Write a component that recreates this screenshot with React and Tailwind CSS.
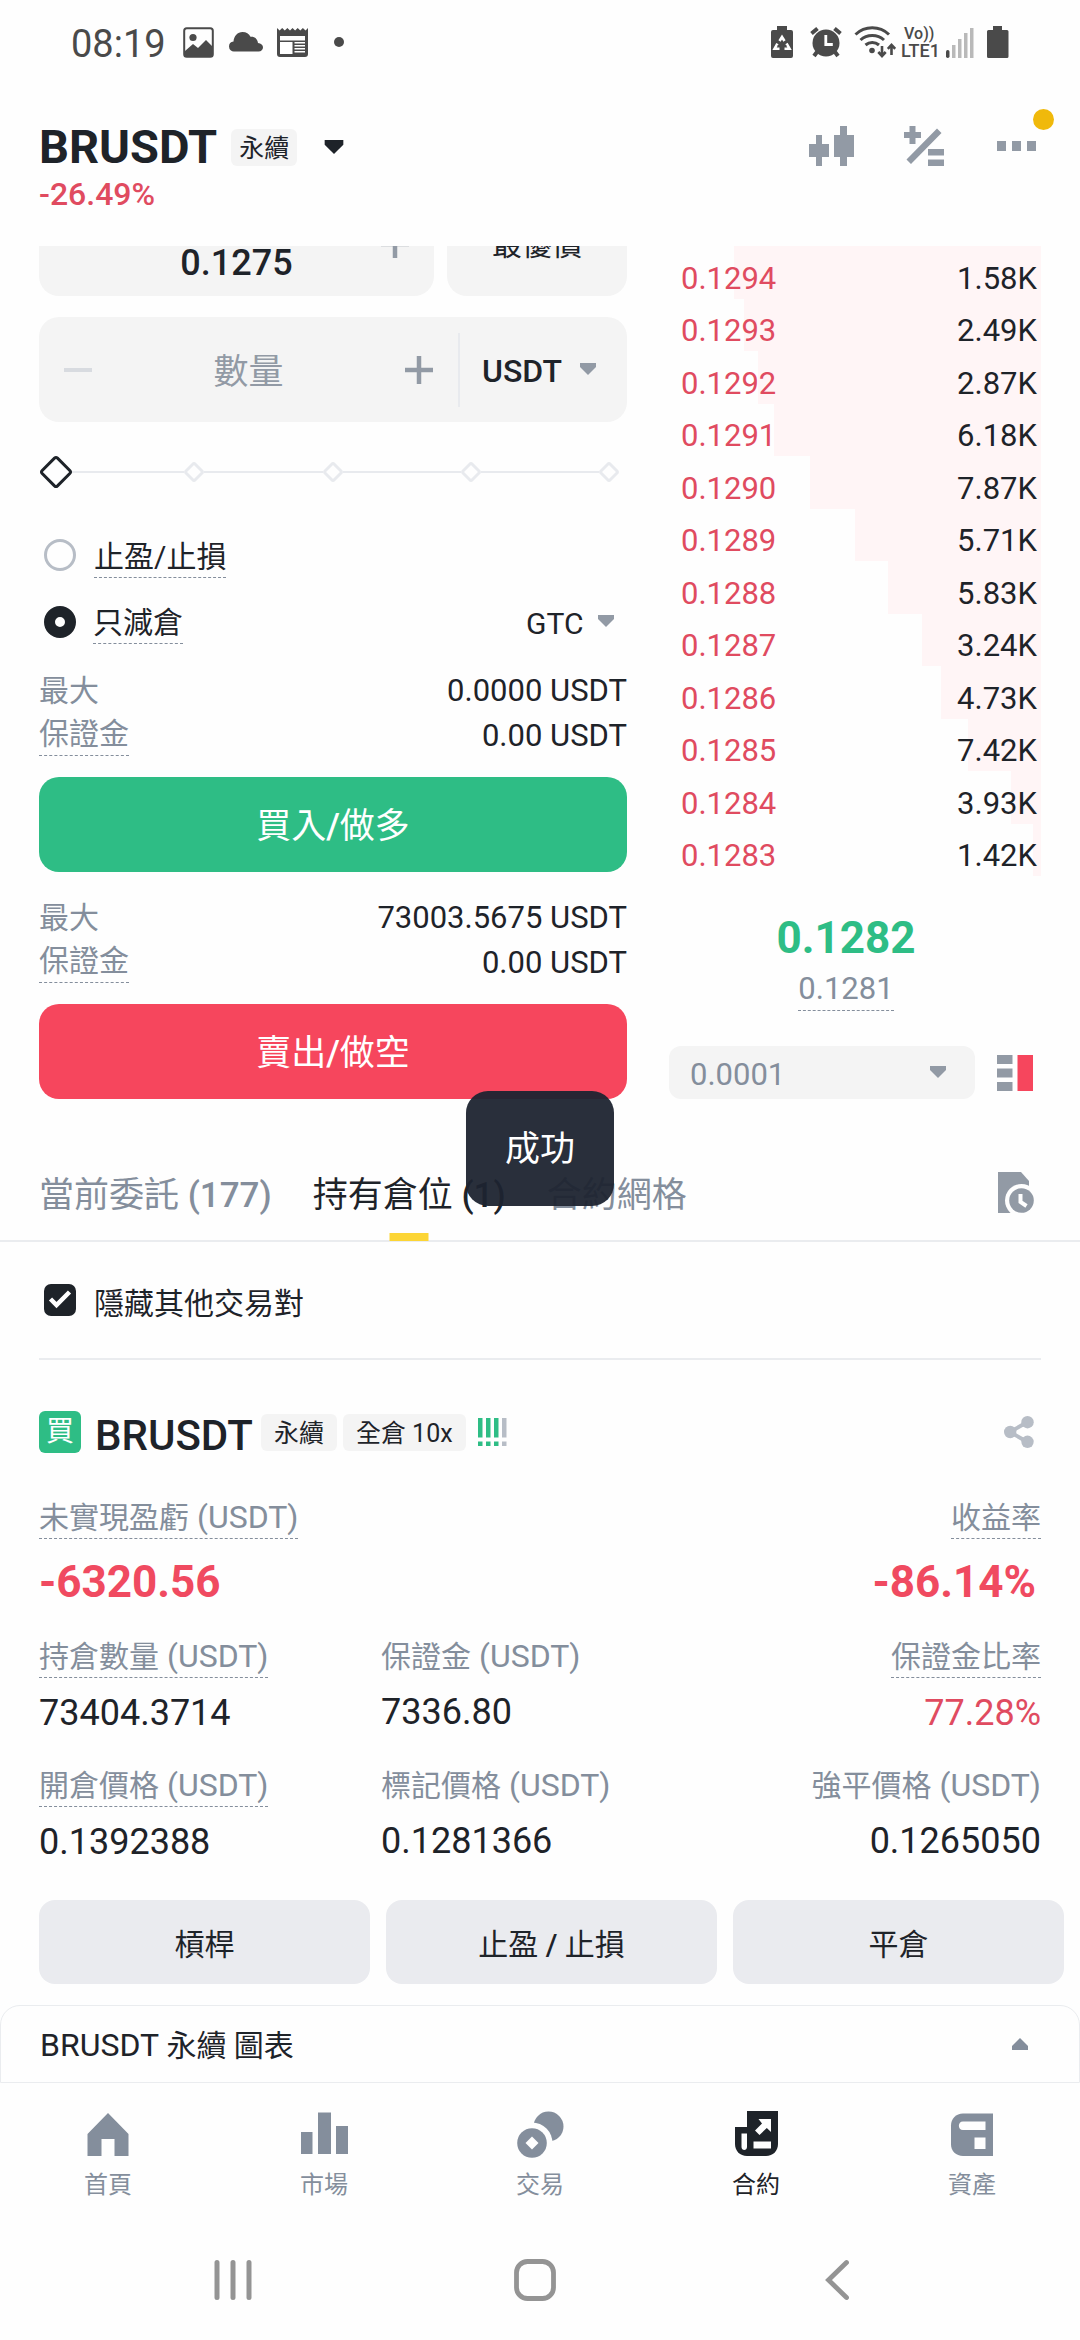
import React from "react";

const ASKS = [
  ["0.1294", "1.58K", 307],
  ["0.1293", "2.49K", 297],
  ["0.1292", "2.87K", 283],
  ["0.1291", "6.18K", 267],
  ["0.1290", "7.87K", 231],
  ["0.1289", "5.71K", 186],
  ["0.1288", "5.83K", 153],
  ["0.1287", "3.24K", 119],
  ["0.1286", "4.73K", 100],
  ["0.1285", "7.42K", 73],
  ["0.1284", "3.93K", 30],
  ["0.1283", "1.42K", 8],
];
const DEPTH_MAX = 372;

function Caret({ className }) {
  return (
    <svg viewBox="0 0 16 12" className={className} fill="currentColor" aria-hidden="true">
      <path d="M0 0h16v4L8 12 0 4z" />
    </svg>
  );
}

function StatusBar() {
  return (
    <div className="flex h-[84px] items-center justify-between pl-[71px] pr-[71px] text-[#4a4a4a]">
      <div className="flex items-center">
        <span className="pt-1 text-[38px] leading-[44px]">08:19</span>
        <svg viewBox="0 0 31 31" className="ml-[17px] h-[31px] w-[31px]" aria-hidden="true">
          <rect x="1.2" y="1.2" width="28.6" height="28.6" rx="2.5" fill="none" stroke="currentColor" strokeWidth="2" />
          <circle cx="10" cy="10.5" r="3.6" fill="currentColor" />
          <path d="M2 24l8-7 5 4 8-8 7 7v9H2z" fill="currentColor" />
        </svg>
        <svg viewBox="0 0 34 20" className="ml-[15px] h-[20px] w-[34px] shrink-0" fill="currentColor" aria-hidden="true">
          <path d="M5.5 19.500A5 5 0 0 1 0 14.500 5 5 0 0 1 4.500 9.500C5 4 8.500 0 13.500 0c3.800 0 6.500 2 8 4.800 4-.5 7 1.900 7.500 6.200 3 .3 5 2 5 4.300 0 2.500-1.800 4.200-4.500 4.200z" />
        </svg>
        <svg viewBox="0 0 31 29" className="ml-[14px] h-[29px] w-[31px]" aria-hidden="true">
          <path d="M0 0l2.600 2.500L5.200 0l2.600 2.500L10.400 0 13 2.500 15.500 0l2.600 2.500L20.700 0l2.600 2.500L25.900 0l2.600 2.500L31 0v26a3 3 0 0 1-3 3H3a3 3 0 0 1-3-3z" fill="currentColor" />
          <path d="M3 8h25v4.500H3zM3 14h12.500v12H3zM17.500 14H28v1.600H17.500zM17.500 17H28v1.600H17.500zM17.500 20H28v1.600H17.500zM17.500 23H28v1.600H17.500z" fill="#fff" />
        </svg>
        <span className="ml-[26px] h-[10px] w-[10px] rounded-full bg-current" />
      </div>
      <div className="flex items-center">
        <svg viewBox="0 0 22 32" className="h-[32px] w-[22px]" aria-hidden="true">
          <path d="M6 0h10v4h4a2 2 0 0 1 2 2v24a2 2 0 0 1-2 2H2a2 2 0 0 1-2-2V6a2 2 0 0 1 2-2h4z" fill="currentColor" />
          <path d="M8.500 15l2.500-4 2.500 4M15.500 17.500l3 5.200h-5M8.500 22.700H3.600l2.800-5" fill="none" stroke="#fff" strokeWidth="2.600" />
          <path d="M11 15.500l2 3 3 1-3 1.500-2 3-2-3-3-1.500 3-1z" fill="currentColor" />
        </svg>
        <svg viewBox="0 0 32 32" className="ml-[17px] h-[32px] w-[32px]" aria-hidden="true">
          <path d="M1.500 7.500l6-5M30.500 7.500l-6-5" stroke="currentColor" strokeWidth="4" />
          <path d="M7 26l-3 4M25 26l3 4" stroke="currentColor" strokeWidth="4" />
          <circle cx="16" cy="17" r="13.500" fill="currentColor" />
          <path d="M15.800 9v9.500h7" fill="none" stroke="#fff" strokeWidth="2.800" />
        </svg>
        <svg viewBox="0 0 42 32" className="ml-[12px] h-[32px] w-[42px]" fill="none" stroke="currentColor" aria-hidden="true">
          <path d="M1.500 8.500c9.500-9 24-9 33.500 0M6.500 14c6.500-6 17-6 23.500 0M11.500 19c4-3.500 9.500-3.500 13.500 0" strokeWidth="3" />
          <circle cx="18" cy="24.500" r="2.800" fill="currentColor" stroke="none" />
          <path d="M28 20v9M24.300 26l3.700 4 3.700-4M37.500 29v-9M33.800 22.800l3.700-4 3.700 4" strokeWidth="2.600" />
        </svg>
        <span className="ml-[5px] flex flex-col font-medium">
          <span className="pl-[3px] text-[16px] leading-[17px]">Vo))</span>
          <span className="text-[18px] leading-[17px]">LTE1</span>
        </span>
        <svg viewBox="0 0 28 31" className="ml-[6px] h-[31px] w-[28px]" aria-hidden="true">
          <rect x="0" y="23" width="3.500" height="8" rx="1.700" fill="currentColor" />
          <path d="M6 18h3.500v13H6zM12 12h3.500v19H12zM18 6h3.500v25H18zM24 1h3.500v30H24z" fill="#b9b9b9" />
        </svg>
        <svg viewBox="0 0 22 32" className="ml-[13px] h-[32px] w-[22px]" fill="currentColor" aria-hidden="true">
          <path d="M6 0h9v4h5a1.500 1.500 0 0 1 1.500 1.500v25A1.500 1.500 0 0 1 20 32H1.500A1.500 1.500 0 0 1 0 30.500v-25A1.500 1.500 0 0 1 1.500 4H6z" />
        </svg>
      </div>
    </div>
  );
}

function Header() {
  return (
    <header className="flex h-[162px] justify-between pl-[39px] pr-[39px] pt-[36px]">
      <div>
        <button type="button" className="flex h-[54px] items-center">
          <h1 className="text-[47px] font-bold leading-[54px]">BRUSDT</h1>
          <span className="ml-[14px] rounded-md bg-[#f4f4f4] px-[8px] pt-[2px] text-[25px] leading-[35px]">永續</span>
          <Caret className="ml-[27px] h-[14px] w-[20px]" />
        </button>
        <p className="mt-[2px] text-[32px] font-medium leading-[36px] text-[#e04b60]">-26.49%</p>
      </div>
      <div className="flex h-[52px] items-center gap-[50px] text-[#929aa5]">
        <button type="button" aria-label="K線圖">
          <svg viewBox="0 0 45 40" className="h-[40px] w-[45px]" fill="currentColor" aria-hidden="true">
            <path d="M7 9h6v9h7v13h-7v9H7v-9H0V18h7zM31 0h7v9h7v22h-7v9h-7v-9h-6V9h6z" />
          </svg>
        </button>
        <button type="button" aria-label="計算機">
          <svg viewBox="0 0 40 40" className="h-[40px] w-[40px]" fill="currentColor" aria-hidden="true">
            <path d="M5.500 0h6v6H17v6h-5.500v6h-6v-6H0V6h5.500zM33 2.500l4.500 4.500L7 38l-4.500-4.500zM24 23h16v6.500H24zM24 33.500h16V40H24z" />
          </svg>
        </button>
        <button type="button" aria-label="更多" className="relative ml-[3px] mr-[5px] flex h-[40px] items-center gap-[6px]">
          <span className="h-[10px] w-[9px] bg-current" />
          <span className="h-[10px] w-[9px] bg-current" />
          <span className="h-[10px] w-[9px] bg-current" />
          <span className="absolute -right-[18px] -top-[17px] h-[21px] w-[21px] rounded-full bg-[#f0b90b]" />
        </button>
      </div>
    </header>
  );
}

function Minus({ className }) {
  return (
    <svg viewBox="0 0 28 28" className={className} aria-hidden="true">
      <path d="M0 14h28" stroke="currentColor" strokeWidth="4" />
    </svg>
  );
}

function Plus({ className }) {
  return (
    <svg viewBox="0 0 28 28" className={className} aria-hidden="true">
      <path d="M0 14h28M14 0v28" stroke="currentColor" strokeWidth="4.500" />
    </svg>
  );
}

function AmountRows({ max }) {
  return (
    <dl className="text-[31px] leading-[45px]">
      <div className="flex justify-between">
        <dt className="text-[30px] text-[#848e9c]">最大</dt>
        <dd>{max} USDT</dd>
      </div>
      <div className="flex h-[45px] items-start justify-between">
        <dt className="border-b border-dashed border-[#848e9c] text-[30px] leading-[42px] text-[#848e9c]">保證金</dt>
        <dd>0.00 USDT</dd>
      </div>
    </dl>
  );
}

function SizeSlider() {
  return (
    <div className="relative flex h-[100px] items-center pr-2">
      <div className="flex w-full items-center">
        <svg viewBox="0 0 34 34" className="relative z-10 -mr-[7px] h-[34px] w-[34px] shrink-0" fill="#fefefe" aria-hidden="true">
          <path d="M15.500 3.200a2.200 2.200 0 0 1 3 0L30.800 15.500a2.200 2.200 0 0 1 0 3L18.500 30.800a2.200 2.200 0 0 1-3 0L3.200 18.500a2.200 2.200 0 0 1 0-3z" stroke="#1e2329" strokeWidth="3" />
        </svg>
        {[0, 1, 2, 3].map((i) => (
          <React.Fragment key={i}>
            <span className="h-[2px] grow bg-[#e8eaee]" />
            <svg viewBox="0 0 20 20" className="h-[20px] w-[20px] shrink-0" fill="none" aria-hidden="true">
              <path d="M9 2a1.400 1.400 0 0 1 2 0l7 7a1.400 1.400 0 0 1 0 2l-7 7a1.400 1.400 0 0 1-2 0l-7-7a1.400 1.400 0 0 1 0-2z" stroke="#e8eaee" strokeWidth="3" />
            </svg>
          </React.Fragment>
        ))}
      </div>
      <input type="range" min="0" max="100" step="25" defaultValue="0" aria-label="數量百分比" className="absolute inset-x-0 top-[30px] z-20 h-[40px] w-full opacity-0" />
    </div>
  );
}

const RADIO = "m-0 h-[32px] w-[32px] shrink-0 appearance-none rounded-full border-[3px] border-[#b7bdc6] checked:border-[11px] checked:border-[#1e2329]";

function OrderForm() {
  return (
    <form className="-mt-[55px] min-w-0" onSubmit={(e) => e.preventDefault()}>
      <div className="flex gap-[13px]">
        <div className="flex h-[105px] min-w-0 grow items-center rounded-[20px] bg-[#f4f4f4] px-[25px]">
          <button type="button" aria-label="減少價格" className="text-[#929aa5]">
            <Minus className="h-[28px] w-[28px]" />
          </button>
          <input aria-label="價格" defaultValue="0.1275" className="h-full min-w-0 grow bg-transparent pt-[38px] text-center text-[36px] font-medium outline-none" />
          <button type="button" aria-label="增加價格" className="text-[#929aa5]">
            <Plus className="h-[28px] w-[28px]" />
          </button>
        </div>
        <button type="button" className="h-[105px] w-[180px] shrink-0 rounded-[20px] bg-[#f4f4f4] pt-[2px] text-[30px]">最優價</button>
      </div>
      <div className="mt-[21px] flex h-[105px] items-center rounded-[20px] bg-[#f4f4f4] pl-[25px]">
        <button type="button" aria-label="減少數量" className="text-[#d8dbe0]">
          <Minus className="h-[28px] w-[28px]" />
        </button>
        <input aria-label="數量" placeholder="數量" className="h-full min-w-0 grow bg-transparent pt-[5px] text-center text-[35px] outline-none placeholder:text-[#929aa5]" />
        <button type="button" aria-label="增加數量" className="text-[#929aa5]">
          <Plus className="h-[28px] w-[28px]" />
        </button>
        <div className="relative ml-[25px] flex h-[74px] w-[169px] shrink-0 items-center border-l-2 border-[#e8eaee]">
          <select aria-label="單位" className="h-full w-full appearance-none bg-transparent pl-[22px] pt-[3px] text-[32px] font-medium outline-none">
            <option>USDT</option>
          </select>
          <Caret className="pointer-events-none absolute right-[31px] top-[30px] h-[12px] w-[16px] text-[#929aa5]" />
        </div>
      </div>
      <SizeSlider />
      <div className="flex h-[66px] items-center pl-[5px]">
        <input type="radio" name="option" id="tpsl" className={RADIO} />
        <label htmlFor="tpsl" className="ml-[18px] mt-[4px] border-b border-dashed border-[#848e9c] text-[30px] leading-[40px]">止盈/止損</label>
      </div>
      <div className="flex h-[67px] items-center justify-between pl-[5px]">
        <div className="flex items-center">
          <input type="radio" name="option" id="reduce" defaultChecked className={RADIO} />
          <label htmlFor="reduce" className="ml-[17px] mt-[4px] border-b border-dashed border-[#848e9c] text-[30px] leading-[40px]">只減倉</label>
        </div>
        <div className="relative flex items-center">
          <select aria-label="有效時間" className="appearance-none bg-transparent pr-[43px] pt-[5px] text-[30px] leading-[40px] outline-none">
            <option>GTC</option>
          </select>
          <Caret className="pointer-events-none absolute right-[13px] top-[16px] h-[12px] w-[16px] text-[#929aa5]" />
        </div>
      </div>
      <div className="mt-[13px]">
        <AmountRows max="0.0000" />
      </div>
      <button type="button" className="mt-[19px] h-[95px] w-full rounded-[20px] bg-[#2ebd85] pt-[6px] text-[35px] text-white">
        買入<span className="font-medium">/</span>做多
      </button>
      <div className="mt-[23px]">
        <AmountRows max="73003.5675" />
      </div>
      <button type="button" className="mt-[19px] h-[95px] w-full rounded-[20px] bg-[#f6465d] pt-[6px] text-[35px] text-white">
        賣出<span className="font-medium">/</span>做空
      </button>
    </form>
  );
}

function OrderBook() {
  return (
    <div className="flex min-w-0 flex-col">
      <table className="h-[630px] w-full border-collapse text-[31px] leading-[36px]">
        <tbody>
          {ASKS.map(([price, amount, depth]) => {
            const pct = (depth / DEPTH_MAX) * 100;
            return (
              <tr key={price} style={{ background: `linear-gradient(to left, #fff5f6 ${pct}%, transparent ${pct}%)` }}>
                <td className="p-0 pl-[12px] pt-[13px] text-[#e04b60]">{price}</td>
                <td className="p-0 pr-[4px] pt-[13px] text-right">{amount}</td>
              </tr>
            );
          })}
        </tbody>
      </table>
      <p className="mt-[36px] pr-[18px] text-center text-[44px] font-bold leading-[52px] text-[#2ebd85]">0.1282</p>
      <div className="flex justify-center pr-[18px] pt-1">
        <span className="border-b border-dashed border-[#848e9c] text-[31px] leading-[42px] text-[#848e9c]">0.1281</span>
      </div>
      <div className="mt-auto flex items-center">
        <div className="relative grow">
          <select aria-label="價格精度" className="h-[53px] w-full appearance-none rounded-xl bg-[#f4f4f4] pl-[21px] pt-[5px] text-[31px] text-[#848e9c] outline-none">
            <option>0.0001</option>
          </select>
          <Caret className="pointer-events-none absolute right-[29px] top-[20px] h-[12px] w-[16px] text-[#929aa5]" />
        </div>
        <button type="button" aria-label="深度顯示" className="ml-[22px] mr-[8px]">
          <svg viewBox="0 0 36 36" className="h-[36px] w-[36px]" aria-hidden="true">
            <path d="M0 0h15.500v9H0zM0 13.500h15.500v9H0zM0 27h15.500v9H0z" fill="#929aa5" />
            <path d="M20.500 0H36v36H20.500z" fill="#f6465d" />
          </svg>
        </button>
      </div>
    </div>
  );
}

function Tabs() {
  const tab = "relative flex h-[142px] items-center whitespace-nowrap pt-[52px]";
  return (
    <div className="relative flex h-[143px] border-b-2 border-[#eaecef] pl-[39px] pr-[46px] text-[35px] text-[#848e9c]">
      <div role="tablist" className="flex grow gap-[41px]">
        <button type="button" role="tab" aria-selected="false" className={tab}>
          <span>當前委託 <span className="font-medium">(177)</span></span>
        </button>
        <button type="button" role="tab" aria-selected="true" className={`${tab} text-[#1e2329]`}>
          <span>持有倉位 <span className="font-medium">(1)</span></span>
          <span className="absolute bottom-0 left-1/2 h-[8px] w-[39px] -translate-x-1/2 bg-[#fcd535]" />
        </button>
        <button type="button" role="tab" aria-selected="false" className={tab}>合約網格</button>
      </div>
      <button type="button" aria-label="歷史紀錄" className="pt-[45px]">
        <svg viewBox="0 0 36 41" className="h-[41px] w-[36px]" aria-hidden="true">
          <path d="M0 0h23l8 9v32H0z" fill="#929aa5" />
          <circle cx="23.500" cy="28.500" r="16.500" fill="#fefefe" />
          <circle cx="23.500" cy="28.500" r="12.300" fill="#929aa5" />
          <path d="M22.500 22v8l6 4" fill="none" stroke="#fefefe" strokeWidth="4" />
        </svg>
      </button>
      <div role="status" className="absolute -top-[8px] left-1/2 -translate-x-1/2 rounded-[22px] bg-[#1e2430]/95 px-[39px] pt-[3px] text-[35px] leading-[112px] whitespace-nowrap text-white">
        成功
      </div>
    </div>
  );
}

function Stat({ label, unit = true, dashed, value, right, big, red }) {
  return (
    <div className={right ? "flex flex-col items-end" : "flex flex-col items-start"}>
      <dt className={`text-[30px] leading-[40px] whitespace-nowrap text-[#848e9c] ${dashed ? "border-b border-dashed border-[#848e9c]" : ""}`}>
        {label}
        {unit && <span className="text-[32px] leading-[32px]"> (USDT)</span>}
      </dt>
      <dd className={`${big ? "mt-[17px] text-[44px] leading-[52px] font-bold" : "mt-[12px] text-[36px] leading-[46px]"} ${big ? "text-[#f04a60]" : red ? "text-[#e04b60]" : ""} ${big && right ? "pr-[5px]" : ""}`}>
        {value}
      </dd>
    </div>
  );
}

function Position() {
  const tag = "rounded-md bg-[#f4f4f4] px-[13px] pt-[2px] text-[25px] leading-[35px] whitespace-nowrap";
  const action = "h-[84px] min-w-0 rounded-2xl bg-[#eaebef] pt-[5px] text-[30px]";
  return (
    <section>
      <div className="mx-[39px] flex h-[118px] items-center border-b-2 border-[#eaecef] pl-[5px]">
        <span className="relative flex h-[32px] w-[32px]">
          <input type="checkbox" id="hide" defaultChecked className="peer h-[32px] w-[32px] appearance-none rounded-[7px] border-2 border-[#1e2329] checked:bg-[#1e2329]" />
          <svg viewBox="0 0 32 32" className="pointer-events-none absolute inset-0 hidden h-[32px] w-[32px] peer-checked:block" fill="none" aria-hidden="true">
            <path d="M6.500 15l6 6L25.500 8" stroke="#fff" strokeWidth="4.500" />
          </svg>
        </span>
        <label htmlFor="hide" className="ml-[18px] pt-[7px] text-[30px] leading-[40px]">隱藏其他交易對</label>
      </div>
      <div className="mx-[39px] mt-[46px] flex h-[52px] items-center">
        <span className="flex h-[42px] w-[42px] items-center justify-center rounded-md bg-[#2ebd85] text-[28px] leading-[40px] text-white">買</span>
        <h2 className="ml-[14px] pt-[7px] text-[42px] font-medium leading-[46px]">BRUSDT</h2>
        <span className={`${tag} ml-[8px]`}>永續</span>
        <span className={`${tag} ml-[6px]`}>全倉 10x</span>
        <svg viewBox="0 0 29 28" className="ml-[12px] h-[28px] w-[29px]" aria-hidden="true">
          <path d="M0 0h4.500v19.500H0zM8 0h4.500v19.500H8zM16 0h4.500v19.500H16zM0 23.500h4.500V28H0zM8 23.500h4.500V28H8zM16 23.500h4.500V28H16z" fill="#2ebd85" />
          <path d="M24 0h4.500v19.500H24zM24 23.500h4.500V28H24z" fill="#b7bdc6" />
        </svg>
        <button type="button" aria-label="分享" className="ml-auto mr-[7px] text-[#b7bdc6]">
          <svg viewBox="0 0 30 32" className="h-[32px] w-[30px]" fill="currentColor" aria-hidden="true">
            <path d="M23.500 6L6 16l17.500 10" fill="none" stroke="currentColor" strokeWidth="4" />
            <circle cx="23.500" cy="6.200" r="6.200" />
            <circle cx="6.200" cy="16" r="6.200" />
            <circle cx="23.500" cy="25.800" r="6.200" />
          </svg>
        </button>
      </div>
      <dl className="mx-[39px] mt-[40px] flex flex-col">
        <div className="flex justify-between">
          <Stat label="未實現盈虧" dashed big value="-6320.56" />
          <Stat label="收益率" unit={false} dashed big right value="-86.14%" />
        </div>
        <div className="mt-[29px] grid grid-cols-[342fr_330fr_330fr]">
          <Stat label="持倉數量" dashed value="73404.3714" />
          <Stat label="保證金" value="7336.80" />
          <Stat label="保證金比率" unit={false} dashed right red value="77.28%" />
        </div>
        <div className="mt-[30px] grid grid-cols-[342fr_330fr_330fr]">
          <Stat label="開倉價格" dashed value="0.1392388" />
          <Stat label="標記價格" value="0.1281366" />
          <Stat label="強平價格" right value="0.1265050" />
        </div>
      </dl>
      <div className="mt-[35px] grid grid-cols-3 gap-4 pl-[39px] pr-4">
        <button type="button" className={action}>槓桿</button>
        <button type="button" className={action}>止盈 <span className="font-medium">/</span> 止損</button>
        <button type="button" className={action}>平倉</button>
      </div>
    </section>
  );
}

const NAV = [
  ["首頁", <path key="h" d="M23 2l20.500 21v22H29.500V28H16.500v17H2.500V23z" fill="currentColor" />],
  ["市場", <path key="m" d="M0 21h11.500v22H0zM17 1.500h13V43H17zM35 15h12v28H35z" fill="currentColor" />],
  [
    "交易",
    <g key="t">
      <circle cx="31.500" cy="15.500" r="15" fill="currentColor" />
      <circle cx="15" cy="32" r="20.500" fill="#fefefe" />
      <circle cx="15" cy="32" r="14.800" fill="currentColor" />
      <path d="M15 25.500l6.500 6.500-6.500 6.500L8.500 32z" fill="#fefefe" />
    </g>,
  ],
  [
    "合約",
    <g key="f">
      <path d="M14 0h31v33c0 7-5 12-12 12H14C7 45 2 40 2 33V16h12z" fill="currentColor" />
      <path d="M8.500 22.500H14V36c0 4-5.500 4-5.500 0zM20.500 30.500H38V37.500H20.500zM25.500 8H38v13l-4.200-4L26.500 24l-4.500-4.500 7-7z" fill="#fefefe" />
    </g>,
  ],
  [
    "資產",
    <g key="a">
      <path d="M14 2.500h30v42.500H14C7 45 2 40 2 33.500V14.500C2 7.500 7 2.500 14 2.500z" fill="currentColor" />
      <path d="M14 10.500h22.500v8.500H14c-5.500 0-5.500-8.500 0-8.500zM25.500 26.500h11v11.500h-11z" fill="#fefefe" />
    </g>,
  ],
];

function BottomBars() {
  return (
    <footer>
      <button type="button" className="mt-[21px] flex h-[78px] w-full items-center justify-between rounded-t-[20px] border border-[#eaecef] bg-[#fefefe] pl-[39px] pr-[51px] text-left">
        <span className="pt-[3px] text-[30px] leading-[40px]"><span className="text-[32px] leading-[32px]">BRUSDT </span>永續 圖表</span>
        <Caret className="h-[12px] w-[16px] rotate-180 text-[#848e9c]" />
      </button>
      <nav className="grid grid-cols-5 pt-[28px]">
        {NAV.map(([label, icon]) => (
          <a
            key={label}
            href="#"
            aria-current={label === "合約" ? "page" : undefined}
            className={`flex flex-col items-center ${label === "合約" ? "text-[#1e2329]" : "text-[#848e9c]"}`}
          >
            <svg viewBox="0 0 47 47" className="h-[47px] w-[47px]" aria-hidden="true">{icon}</svg>
            <span className="mt-[10px] text-[24px] leading-[34px]">{label}</span>
          </a>
        ))}
      </nav>
      <div className="grid h-[138px] grid-cols-3 items-center justify-items-center pl-[82px] pr-[92px] pt-[18px] text-[#949494]">
        <button type="button" aria-label="最近使用">
          <svg viewBox="0 0 38 42" className="h-[42px] w-[38px]" stroke="currentColor" strokeWidth="5" strokeLinecap="round" aria-hidden="true">
            <path d="M3 3.500v35M19 3.500v35M35 3.500v35" />
          </svg>
        </button>
        <button type="button" aria-label="主畫面">
          <svg viewBox="0 0 42 42" className="h-[42px] w-[42px]" fill="none" stroke="currentColor" strokeWidth="4.800" aria-hidden="true">
            <rect x="2.500" y="2.500" width="37" height="37" rx="11" />
          </svg>
        </button>
        <button type="button" aria-label="返回">
          <svg viewBox="0 0 24 42" className="h-[42px] w-[24px]" fill="none" stroke="currentColor" strokeWidth="4.800" strokeLinecap="round" aria-hidden="true">
            <path d="M21.500 3.500L3.500 21l18 17.500" />
          </svg>
        </button>
      </div>
    </footer>
  );
}

export default function App() {
  return (
    <div className="flex min-h-screen flex-col bg-[#fefefe] font-['Roboto','Noto_Sans_CJK_TC',sans-serif] text-[#1e2329]">
      <StatusBar />
      <Header />
      <main className="grow overflow-hidden">
        <div className="grid grid-cols-[588fr_372fr] gap-[42px] px-[39px]">
          <OrderForm />
          <OrderBook />
        </div>
        <Tabs />
        <Position />
      </main>
      <BottomBars />
    </div>
  );
}
